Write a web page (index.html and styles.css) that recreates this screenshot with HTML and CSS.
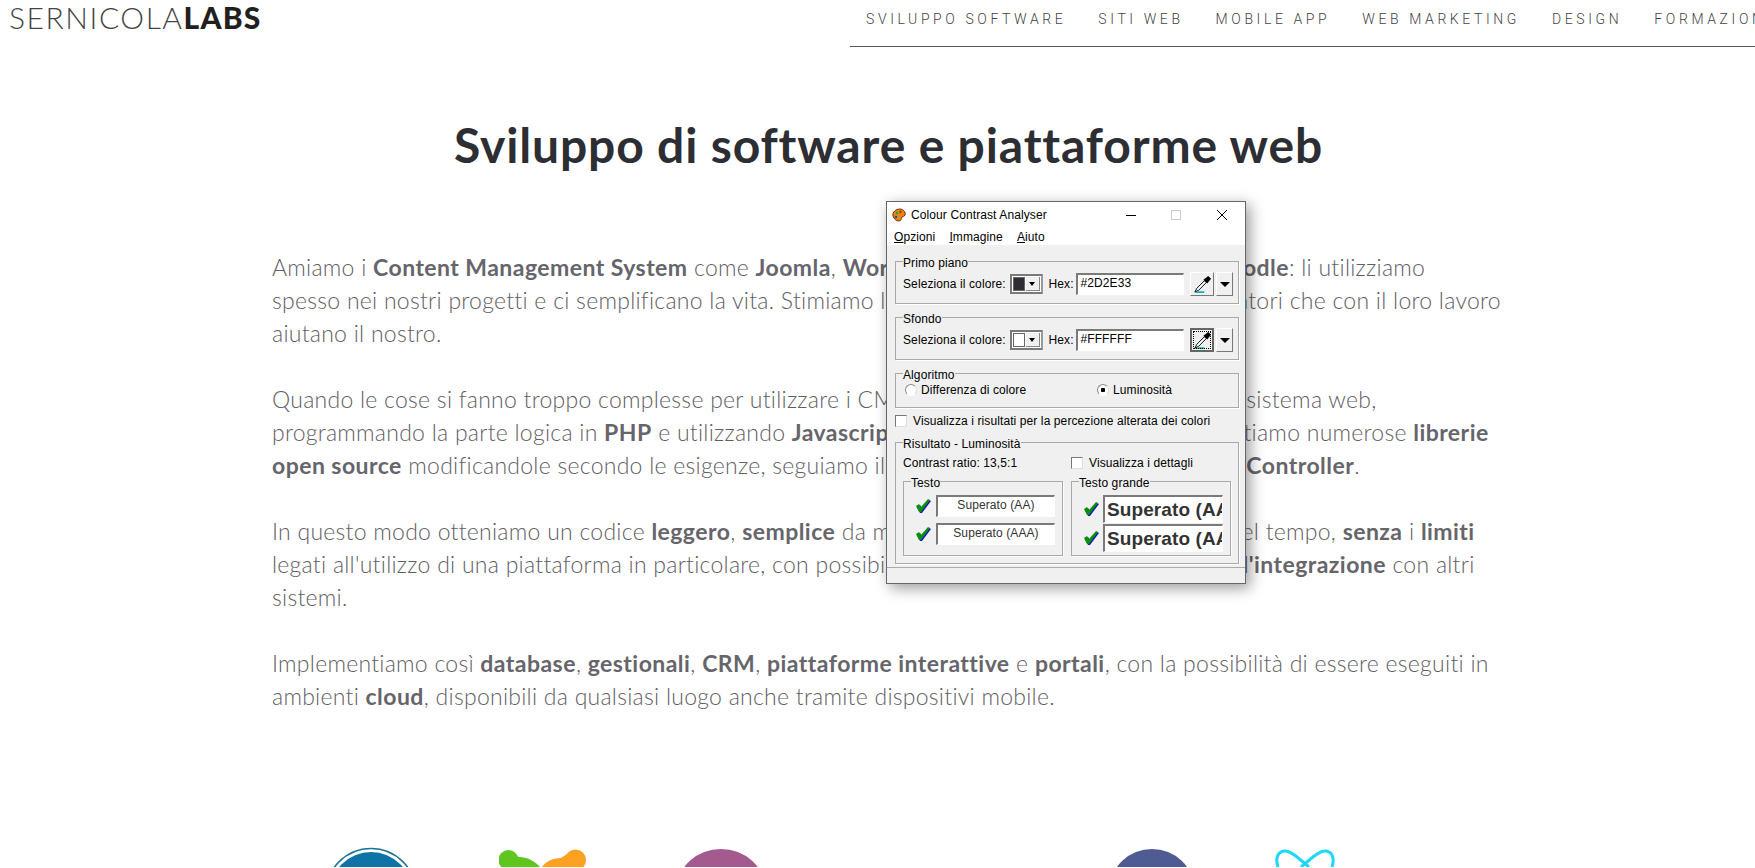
FILE: index.html
```html
<!DOCTYPE html>
<html lang="it">
<head>
  <meta charset="UTF-8" />
  <title>Sviluppo di software e piattaforme web</title>
  <link rel="stylesheet" href="styles.css">
</head>
<body>
  <header class="top">
    <a class="logo"><span class="logo-thin">SERNICOLA</span><b>LABS</b></a>
    <nav class="nav">
      <a>Sviluppo software</a>
      <a>Siti web</a>
      <a>Mobile app</a>
      <a>Web marketing</a>
      <a>Design</a>
      <a>Formazione</a>
    </nav>
  </header>

  <main class="content">
    <h1>Sviluppo di software e piattaforme web</h1>

    <p>Amiamo i <b>Content Management System</b> come <b>Joomla</b>, <b>WordPress</b>, <b>Shopify</b>, <b>Prestashop</b> e <b>Moodle</b>: li utilizziamo<br>
    spesso nei nostri progetti e ci semplificano la vita. Stimiamo le community software e gli sviluppatori che con il loro lavoro<br>
    aiutano il nostro.</p>

    <p>Quando le cose si fanno troppo complesse per utilizzare i CMS, programmiamo da zero il nostro sistema web,<br>
    programmando la parte logica in <b>PHP</b> e utilizzando <b>Javascript</b> per le interfacce dell'utente. Sfruttiamo numerose <b>librerie</b><br>
    <b>open source</b> modificandole secondo le esigenze, seguiamo il collaudato paradigma <b>Model View Controller</b>.</p>

    <p>In questo modo otteniamo un codice <b>leggero</b>, <b>semplice</b> da mantenere, ed evolvere facilmente nel tempo, <b>senza</b> i <b>limiti</b><br>
    legati all'utilizzo di una piattaforma in particolare, con possibilità di estrema personalizzazione, e <b>l'integrazione</b> con altri<br>
    sistemi.</p>

    <p>Implementiamo così <b>database</b>, <b>gestionali</b>, <b>CRM</b>, <b>piattaforme interattive</b> e <b>portali</b>, con la possibilità di essere eseguiti in<br>
    ambienti <b>cloud</b>, disponibili da qualsiasi luogo anche tramite dispositivi mobile.</p>
  </main>

  <section class="logos">
    <svg class="logo-wp" viewBox="0 0 94 20"><circle cx="47" cy="46.500" r="45" fill="none" stroke="#21759b" stroke-width="1.6"/><circle cx="47" cy="46.500" r="41.500" fill="#0f73a8"/></svg>
    <svg class="logo-joomla" viewBox="0 0 88 18"><circle cx="9.500" cy="11" r="10" fill="#5fc61f"/><path d="M4 18L9 3l11 5c8 0 16 4 21 10z" fill="#5fc61f"/><circle cx="76.500" cy="11" r="10.500" fill="#fca121"/><path d="M43 18c4-6 12-9 19-9l9-6 9 15z" fill="#fca121"/></svg>
    <svg class="logo-oval" viewBox="0 0 76 18"><ellipse cx="38" cy="40" rx="44" ry="40" fill="#a55a8f"/></svg>
    <svg class="logo-php" viewBox="0 0 70 18"><ellipse cx="35" cy="40" rx="42" ry="40" fill="#4f5b93"/></svg>
    <svg class="logo-react" viewBox="0 0 60 18"><g fill="none" stroke="#1fd8f7" stroke-width="3"><path d="M3 18C0 9 3 2 10 2c7 0 14 8 24 16"/><path d="M57 18C60 9 57 2 50 2c-7 0-14 8-24 16"/></g></svg>
  </section>

  <!-- finestra sopra la pagina -->
  <div class="win">
    <div class="win-title">
      <svg class="win-icon" viewBox="0 0 14 14"><path d="M1 8C0 4 4 1 8 1c3 0 6 3 5 6-1 2-2 1-3 2-1 2 0 3-3 4-3 0-5-2-6-5z" fill="#e08a10" stroke="#7a2c00"/><circle cx="5" cy="5" r="1.2" fill="#2a9d3a"/><circle cx="8.500" cy="4" r="1.200" fill="#c22"/><circle cx="4" cy="9" r="1.200" fill="#24c"/></svg>
      <span class="win-name">Colour Contrast Analyser</span>
      <svg class="ctl ctl-min" viewBox="0 0 10 10"><path d="M0 5.500h10" stroke="#000"/></svg>
      <svg class="ctl ctl-max" viewBox="0 0 10 10"><rect x=".5" y=".5" width="9" height="9" fill="none" stroke="#ccc"/></svg>
      <svg class="ctl ctl-close" viewBox="0 0 12 12"><path d="M1 1l10 10M11 1L1 11" stroke="#000" fill="none"/></svg>
    </div>
    <div class="win-menu">
      <span><u>O</u>pzioni</span>
      <span><u>I</u>mmagine</span>
      <span><u>A</u>iuto</span>
    </div>

    <div class="win-body">
      <fieldset class="group">
        <legend>Primo piano</legend>
        <div class="pick">
          <span class="pick-label">Seleziona il colore:</span>
          <span class="combo"><i class="swatch swatch-dark"></i><i class="combo-btn"><i class="arrow"></i></i></span>
          <span class="hex-label">Hex:</span>
          <span class="hex">#2D2E33</span>
          <span class="btn btn-drop"><svg viewBox="0 0 20 20"><path d="M2 18l2-4 8-8 2 2-8 8z" fill="#fff" stroke="#000"/><path d="M11 5l5-4 3 3-4 5z" fill="#000"/><path d="M2 19h10v-2H5z" fill="#0cb5b5"/></svg></span>
          <span class="btn btn-arrow"><i class="arrow arrow-big"></i></span>
        </div>
      </fieldset>

      <fieldset class="group">
        <legend>Sfondo</legend>
        <div class="pick">
          <span class="pick-label">Seleziona il colore:</span>
          <span class="combo"><i class="swatch swatch-white"></i><i class="combo-btn"><i class="arrow"></i></i></span>
          <span class="hex-label">Hex:</span>
          <span class="hex">#FFFFFF</span>
          <span class="btn btn-drop btn-focus"><svg viewBox="0 0 20 20"><path d="M2 18l2-4 8-8 2 2-8 8z" fill="#fff" stroke="#000"/><path d="M11 5l5-4 3 3-4 5z" fill="#000"/><path d="M2 19h10v-2H5z" fill="#0cb5b5"/></svg></span>
          <span class="btn btn-arrow"><i class="arrow arrow-big"></i></span>
        </div>
      </fieldset>

      <fieldset class="group group-algo">
        <legend>Algoritmo</legend>
        <div class="opts">
          <label class="opt opt-first"><i class="radio"></i>Differenza di colore</label>
          <label class="opt"><i class="radio radio-on"></i>Luminosità</label>
        </div>
      </fieldset>

      <label class="check-row"><i class="check"></i>Visualizza i risultati per la percezione alterata dei colori</label>

      <fieldset class="group group-result">
        <legend>Risultato - Luminosità</legend>
        <div class="result-head">
          <span class="ratio">Contrast ratio: 13,5:1</span>
          <label class="check-inline"><i class="check"></i>Visualizza i dettagli</label>
        </div>
        <div class="result-cols">
          <fieldset class="sub">
            <legend>Testo</legend>
            <div class="res">
              <svg class="tick" viewBox="0 0 16 14"><path d="M2 8l3-2 2 3 7-8 2 1-9 12H5z" fill="#1414c8"/><path d="M1 7l3-2 2 3 7-8 2 1-9 12H4z" fill="#0a8f0a"/></svg>
              <span class="res-box">Superato (AA)</span>
            </div>
            <div class="res">
              <svg class="tick" viewBox="0 0 16 14"><path d="M2 8l3-2 2 3 7-8 2 1-9 12H5z" fill="#1414c8"/><path d="M1 7l3-2 2 3 7-8 2 1-9 12H4z" fill="#0a8f0a"/></svg>
              <span class="res-box">Superato (AAA)</span>
            </div>
          </fieldset>
          <fieldset class="sub">
            <legend>Testo grande</legend>
            <div class="res res-big">
              <svg class="tick" viewBox="0 0 16 14"><path d="M2 8l3-2 2 3 7-8 2 1-9 12H5z" fill="#1414c8"/><path d="M1 7l3-2 2 3 7-8 2 1-9 12H4z" fill="#0a8f0a"/></svg>
              <span class="res-box res-box-big">Superato (AA)</span>
            </div>
            <div class="res res-big">
              <svg class="tick" viewBox="0 0 16 14"><path d="M2 8l3-2 2 3 7-8 2 1-9 12H5z" fill="#1414c8"/><path d="M1 7l3-2 2 3 7-8 2 1-9 12H4z" fill="#0a8f0a"/></svg>
              <span class="res-box res-box-big">Superato (AAA)</span>
            </div>
          </fieldset>
        </div>
      </fieldset>
    </div>
    <div class="win-status"></div>
  </div>
</body>
</html>
```

FILE: styles.css
```css
html, body {
  margin: 0;
  height: 868px;
  overflow: hidden;
}
body {
  background: #fff;
  font-family: 'Lato', sans-serif;
  color: #5f5e64;
}

/* header */
.top {
  display: flex;
  justify-content: space-between;
  height: 47px;
}
.logo {
  padding: 0 0 0 9px;
  font-size: 30px;
  line-height: 34px;
  color: #231f20;
}
.logo-thin {
  font-weight: 300;
  letter-spacing: 1.55px;
  color: #444;
}
.logo b {
  font-weight: 900;
  letter-spacing: 1.2px;
}
.nav {
  display: flex;
  gap: 32px;
  flex: none;
  width: 905px;
  box-sizing: border-box;
  padding: 9px 0 0 16px;
  border-bottom: 1px solid #555;
  overflow: hidden;
  white-space: nowrap;
}
.nav a {
  font-family: 'Roboto', sans-serif;
  font-size: 14px;
  font-weight: 300;
  line-height: 20px;
  letter-spacing: 3.6px;
  text-transform: uppercase;
  color: #444;
  flex: none;
}

/* testo */
.content {
  width: 1233px;
  margin-left: 272px;
}
h1 {
  margin: 66px 0 74px;
  font-size: 48px;
  line-height: 64px;
  font-weight: 700;
  letter-spacing: 0.85px;
  text-align: center;
  color: #2d2e33;
}
p {
  margin: 0 0 33px;
  font-size: 23px;
  line-height: 33px;
  font-weight: 300;
  white-space: nowrap;
  letter-spacing: 0.26px;
}
p b {
  font-weight: 700;
  letter-spacing: 0.45px;
  color: #66656b;
}

/* loghi tagliati in fondo */
.logos {
  display: flex;
  align-items: flex-end;
  height: 20px;
  margin: 134px 0 0 324px;
  overflow: hidden;
}
.logos svg {
  height: 18px;
  flex: none;
}
.logos .logo-wp { width: 94px; height: 20px; }
.logo-joomla { width: 88px; margin-left: 81px; }
.logo-oval { width: 76px; margin-left: 96px; }
.logo-php { width: 70px; margin-left: 358px; }
.logo-react { width: 60px; margin-left: 88px; }

/* finestra */
.win {
  position: absolute;
  left: 886px;
  top: 201px;
  width: 360px;
  height: 383px;
  box-sizing: border-box;
  display: flex;
  flex-direction: column;
  border: 1px solid #666;
  background: #f0f0f0;
  box-shadow: 4px 4px 14px rgba(0, 0, 0, 0.4);
  font-family: 'Liberation Sans', sans-serif;
  font-size: 12px;
  letter-spacing: 0.1px;
  color: #000;
}
.win-title {
  display: flex;
  align-items: center;
  height: 25px;
  background: #fff;
  padding-left: 5px;
}
.win-icon {
  width: 14px;
  height: 14px;
  margin-right: 5px;
}
.win-name {
  flex: 1;
}
.ctl {
  width: 10px;
  height: 10px;
  margin-right: 35px;
}
.ctl-close {
  width: 12px;
  height: 12px;
  margin-right: 17px;
}
.win-menu {
  display: flex;
  gap: 14px;
  height: 18px;
  padding-left: 7px;
  background: #fff;
  line-height: 20px;
}
.win-body {
  flex: 1;
  padding: 7px 6px 0 8px;
}
.group {
  margin: 0 0 4px;
  padding: 2px 5px 7px 7px;
  border: 1px solid #a9a9a9;
  box-shadow: 1px 1px 0 #fff;
  min-width: 0;
}
legend {
  padding: 4px 0 0;
  line-height: 14px;
}
.pick {
  display: flex;
  align-items: center;
  height: 24px;
}
.pick-label {
  width: 107px;
}
.combo {
  display: flex;
  width: 33px;
  height: 20px;
  box-sizing: border-box;
  padding: 1px;
  border: 2px solid #7a7a7a;
  border-right-color: #999;
  background: #fff;
}
.swatch {
  width: 12px;
  border: 1px solid #666;
  box-sizing: border-box;
}
.swatch-dark { background: #2d2e33; }
.swatch-white { background: #fff; }
.combo-btn {
  flex: 1;
  display: flex;
  align-items: center;
  justify-content: center;
  margin-left: 1px;
  background: #f0f0f0;
  border-right: 1px solid #888;
  border-bottom: 1px solid #888;
}
.arrow {
  width: 0;
  height: 0;
  border: 3.5px solid transparent;
  border-top: 4px solid #000;
  border-bottom: 0;
}
.arrow-big {
  border-width: 5px 5px 0;
}
.hex-label {
  width: 28px;
  margin-left: 6px;
}
.hex {
  width: 108px;
  height: 22px;
  box-sizing: border-box;
  padding-left: 2px;
  border: 2px solid #7a7a7a;
  border-right: 1px solid #fff;
  border-bottom: 1px solid #fff;
  background: #fff;
  line-height: 16px;
}
.btn {
  display: flex;
  align-items: center;
  justify-content: center;
  height: 24px;
  box-sizing: border-box;
  border: 1px solid #fff;
  border-right-color: #777;
  border-bottom-color: #777;
  background: #f0f0f0;
}
.btn-drop {
  width: 24px;
  margin-left: 6px;
}
.btn-drop svg {
  width: 19px;
  height: 19px;
}
.btn-focus {
  border: 2px solid #666;
  outline: 1px dotted #000;
  outline-offset: -4px;
}
.btn-arrow {
  width: 17px;
  margin-left: 2px;
}
.group-algo {
  height: 44px;
  box-sizing: border-box;
  padding: 1px 0 0 9px;
  margin-bottom: 6px;
}
.group-algo legend {
  margin-left: -2px;
}
.opts {
  display: flex;
}
.opt {
  display: flex;
  align-items: center;
  height: 14px;
}
.opt-first {
  width: 192px;
}
.radio {
  width: 12px;
  height: 12px;
  box-sizing: border-box;
  margin-right: 4px;
  border: 1px solid #8a8a8a;
  border-right-color: #ddd;
  border-bottom-color: #fff;
  border-radius: 50%;
  background: #fff;
}
.radio-on {
  background: radial-gradient(circle, #000 0 2px, #fff 2.500px);
}
.check {
  width: 12px;
  height: 12px;
  box-sizing: border-box;
  flex: none;
  margin-right: 6px;
  border: 1px solid #777;
  border-right-color: #ddd;
  border-bottom-color: #ddd;
  background: #fff;
}
.check-row {
  display: flex;
  align-items: center;
  height: 14px;
  margin-bottom: 5px;
}
.group-result {
  height: 131px;
  box-sizing: border-box;
  padding: 5px 7px 0;
  margin-bottom: 0;
}
.result-head {
  display: flex;
  height: 16px;
  line-height: 14px;
}
.ratio {
  width: 168px;
}
.check-inline {
  display: flex;
  align-items: center;
  height: 14px;
}
.result-cols {
  display: flex;
  gap: 8px;
}
.sub {
  width: 160px;
  height: 84px;
  box-sizing: border-box;
  margin: 0;
  padding: 5px 7px 0 11px;
  border: 1px solid #a9a9a9;
  box-shadow: 1px 1px 0 #fff;
  min-width: 0;
}
.sub legend {
  margin-left: -4px;
}
.res {
  display: flex;
  align-items: center;
  gap: 5px;
  height: 22px;
  margin-bottom: 6px;
}
.res-big {
  height: 28px;
  margin-bottom: 1px;
  gap: 4px;
}
.tick {
  width: 16px;
  height: 14px;
  flex: none;
}
.res-box {
  flex: 1;
  height: 100%;
  box-sizing: border-box;
  border: 2px solid #7a7a7a;
  border-right: 1px solid #fff;
  border-bottom: 1px solid #fff;
  background: #fff;
  text-align: center;
  line-height: 17px;
  color: #333;
  overflow: hidden;
  white-space: nowrap;
}
.res-box-big {
  padding-left: 2px;
  text-align: left;
  font-size: 19px;
  line-height: 25px;
  font-weight: 700;
}
.win-status {
  height: 15px;
  border-top: 1px solid #a9a9a9;
}
```
